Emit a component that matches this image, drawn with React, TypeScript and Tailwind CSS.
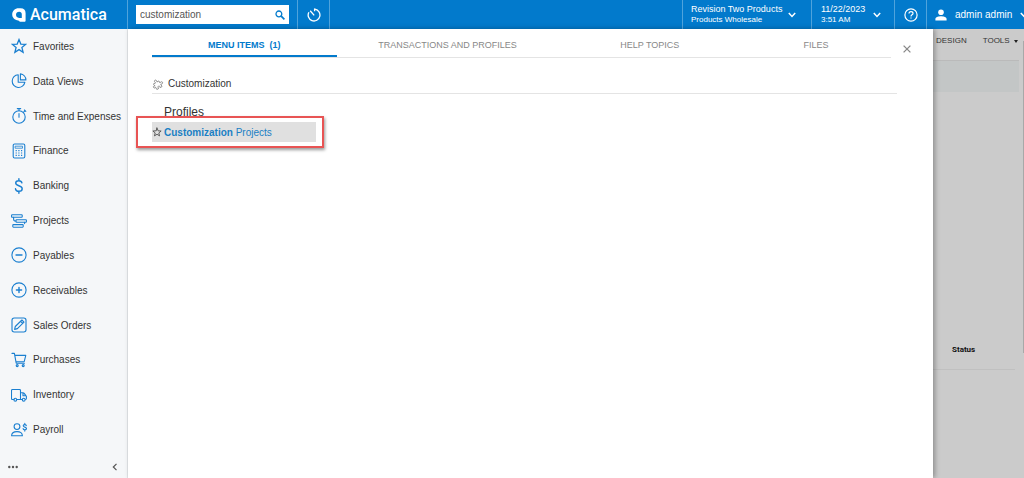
import { useState } from "react";
import type { ReactNode } from "react";

type IconProps = { children: ReactNode; className?: string };

// Shared frame for the line icons, drawn on a 16 unit grid
const LineIcon = ({ children, className = "size-4" }: IconProps) => (
  <svg
    viewBox="0 0 16 16"
    fill="none"
    stroke="currentColor"
    strokeWidth="1.1"
    strokeLinecap="round"
    strokeLinejoin="round"
    className={className}
    aria-hidden="true"
  >
    {children}
  </svg>
);

const starPath = "M8 1.6l1.8 4.5 4.8.3-3.7 3.1 1.2 4.7L8 11.6l-4.1 2.6 1.2-4.7-3.7-3.1 4.8-.3z";

const menuItems = [
  { name: "Favorites", icon: <path strokeLinejoin="miter" strokeWidth="1.3" d={starPath} /> },
  {
    name: "Data Views",
    icon: (
      <>
        <path d="M7.2 1.7a6.4 6.4 0 1 0 6.7 7.5H7.2z" />
        <path d="M9.4.9a6.2 6.2 0 0 1 5.5 6H9.4z" />
      </>
    ),
  },
  {
    name: "Time and Expenses",
    icon: (
      <>
        <circle cx="8" cy="9" r="6.2" />
        <path d="M6.3.6h3.4M8 .8v2M8 5.5v3.7M12.6 4.2l1.5-1.5M13.4 2l1.4 1.4" />
      </>
    ),
  },
  {
    name: "Finance",
    icon: (
      <>
        <rect x="2.2" y="1" width="11.6" height="14" rx="1.4" />
        <rect x="4.5" y="3.2" width="7" height="2" strokeWidth=".8" />
        <path strokeWidth="1.2" strokeDasharray="1.2 1.5" strokeLinecap="butt" d="M4.6 7.7h7M4.6 10h7M4.6 12.3h7" />
      </>
    ),
  },
  {
    name: "Banking",
    icon: (
      <path
        strokeWidth="1.4"
        d="M10.9 4.8C10.6 3.4 9.4 2.7 7.8 2.7 6 2.7 4.7 3.6 4.7 5.1c0 3.5 6.5 1.8 6.5 5.6 0 1.6-1.4 2.6-3.3 2.6S4.7 12.4 4.5 10.8M7.9.8v1.9M7.9 13.3v1.9"
      />
    ),
  },
  {
    name: "Projects",
    icon: (
      <>
        <rect x=".6" y="1.7" width="10.6" height="2.6" rx=".6" />
        <rect x="5" y="6.7" width="10.4" height="2.6" rx=".6" />
        <rect x="1.8" y="11.6" width="10.4" height="2.6" rx=".6" />
        <path d="M2.6 4.4v1.8c0 1.1.8 1.8 2.2 1.8M13.6 9.4v1.2" />
      </>
    ),
  },
  {
    name: "Payables",
    icon: (
      <>
        <circle cx="8" cy="8" r="7.1" />
        <path strokeWidth="1.3" d="M5 8h6" />
      </>
    ),
  },
  {
    name: "Receivables",
    icon: (
      <>
        <circle cx="8" cy="8" r="7.1" />
        <path strokeWidth="1.4" d="M5.4 8h5.2M8 5.4v5.2" />
      </>
    ),
  },
  {
    name: "Sales Orders",
    icon: (
      <>
        <rect x="1" y="1" width="14" height="14" rx="2.2" />
        <path d="M3.6 12.4l.7-2.9 6.6-6.5 2.1 2.1-6.6 6.5zM9.6 4.3l2.1 2.1" />
      </>
    ),
  },
  {
    name: "Purchases",
    icon: (
      <>
        <path d="M1 1.4h2.4l1.8 9.8h8.2M3.8 3.4h11l-1.6 6.2-8.2.1" />
        <circle cx="6.2" cy="13.6" r="1" />
        <circle cx="12.2" cy="13.6" r="1" />
      </>
    ),
  },
  {
    name: "Inventory",
    icon: (
      <>
        <path d="M3 12.5H1.4c-.5 0-.9-.4-.9-.9V3.4c0-.5.4-.9.9-.9h7.2c.5 0 .9.4.9.9v9.1H5.8M9.5 5.8h2.6c.4 0 .7.1.9.4l2.1 2.6c.2.2.3.5.3.8v2c0 .5-.4.9-.9.9M9.5 12.5h1.7M12 6v2.8h3" />
        <circle cx="4.3" cy="12.7" r="1.4" />
        <circle cx="12.7" cy="12.7" r="1.4" />
      </>
    ),
  },
  {
    name: "Payroll",
    icon: (
      <>
        <circle cx="6" cy="4.6" r="2.9" />
        <path d="M.6 13.8c0-2.8 2.1-4.2 5.4-4.2s5.4 1.4 5.4 4.2z" />
        <path d="M15.3 3.6c-.2-.7-.7-1-1.5-1-1 0-1.6.5-1.6 1.2 0 1.8 3.3.9 3.3 2.8 0 .8-.7 1.3-1.7 1.3s-1.6-.5-1.7-1.3M13.8 1.4v1.2M13.8 7.9v1.2" />
      </>
    ),
  },
];

const tabs = ["MENU ITEMS  (1)", "TRANSACTIONS AND PROFILES", "HELP TOPICS", "FILES"];

const Chevron = () => (
  <svg viewBox="0 0 8 6" className="w-2 shrink-0" fill="none" stroke="currentColor" strokeWidth="1.5" aria-hidden="true">
    <path d="M.8 1l3.2 3.4L7.2 1" />
  </svg>
);

const Logo = () => (
  <svg viewBox="0 0 14 14" className="size-3.5" aria-hidden="true">
    <path
      fill="#fff"
      fillRule="evenodd"
      d="M6.6.2h2c3.200 0 5 1.800 5 5v7.300c0 .8-.4 1.300-1.200 1.300H8.600c-1 0-1.400-.7-2.200-1.300C2.500 12 .2 9.500.2 6.500.2 2.800 3 .2 6.600.2zM7.200 3.800C5.300 3.800 4 5 4 6.800S5.300 9.900 7.100 9.900h2.700V6.500c0-1.700-1-2.700-2.600-2.700z"
    />
  </svg>
);

const Header = () => {
  const [query, setQuery] = useState("customization");

  return (
    <header className="flex h-[29px] shrink-0 bg-[#027acc] text-white">
      <a href="#home" className="flex w-32 items-center gap-1 border-r border-[#4fa3dc] pl-3">
        <Logo />
        <span className="font-[Roboto,sans-serif] text-[16px] leading-none font-medium">Acumatica</span>
      </a>

      {/* Search */}
      <div className="flex w-[170px] items-center border-r border-[#4fa3dc] px-2">
        <div className="flex h-[19px] w-full items-center bg-white pr-1 pl-1">
          <input
            type="text"
            aria-label="Search"
            value={query}
            onChange={(e) => setQuery(e.target.value)}
            autoFocus
            className="w-full min-w-0 text-[10px] text-[#555] outline-none"
          />
          <button type="button" aria-label="Run search" className="text-[#027acc]">
            <svg viewBox="0 0 10 10" className="size-2.5" fill="none" stroke="currentColor" strokeWidth="1.3">
              <circle cx="3.9" cy="3.9" r="2.9" />
              <path strokeWidth="1.7" d="M6.2 6.2l3.2 3.2" />
            </svg>
          </button>
        </div>
      </div>
      <button type="button" aria-label="Recently visited" className="flex w-8 items-center justify-center border-r border-[#4fa3dc]">
        <svg viewBox="0 0 14 14" className="size-3.5" fill="none" stroke="currentColor" strokeWidth="1.3">
          <path d="M7.6 1.2A5.900 5.900 0 1 1 1.900 4.200" />
          <path d="M7.600.6v2.600M3.200 2.800l4 4.600" />
        </svg>
      </button>

      <div className="flex-1" />

      <button type="button" className="flex w-[129px] items-center gap-[6px] border-l border-[#4fa3dc] pl-2 text-left">
        <span>
          <span className="block text-[9px] leading-[11px]">Revision Two Products</span>
          <span className="block text-[8px] leading-[10px]">Products Wholesale</span>
        </span>
        <Chevron />
      </button>
      <button type="button" className="flex w-[83px] items-center gap-2 border-l border-[#4fa3dc] pl-[9px] text-left">
        <span>
          <span className="block text-[9px] leading-[11px]">11/22/2023</span>
          <span className="block text-[8px] leading-[10px]">3:51 AM</span>
        </span>
        <Chevron />
      </button>
      <button type="button" aria-label="Help" className="flex w-8 items-center justify-center border-l border-[#4fa3dc]">
        <svg viewBox="0 0 14 14" className="size-3.5" fill="none" stroke="currentColor" strokeWidth="1.2">
          <circle cx="7" cy="7" r="6.1" />
          <path d="M5 5.6c0-1.2.8-2 2-2s2 .8 2 1.8c0 1.4-2 1.5-2 3M7 9.4v1.2" />
        </svg>
      </button>
      <button type="button" className="flex w-[98px] items-center gap-2 border-l border-[#4fa3dc] pl-2">
        <svg viewBox="0 0 12 12" className="size-3 shrink-0" fill="currentColor" aria-hidden="true">
          <circle cx="6" cy="3.2" r="2.8" />
          <path d="M.4 11.4V10C.4 8 3.4 7.2 6 7.2s5.6.8 5.6 2.8v1.4z" />
        </svg>
        <span className="text-[10px] whitespace-nowrap">admin admin</span>
        <Chevron />
      </button>
    </header>
  );
};

const Sidebar = () => (
  <aside className="flex w-32 shrink-0 flex-col border-r border-[#e3e6e9] bg-[#f5f7f9] text-[#333]">
    <nav className="flex flex-1 flex-col">
      {menuItems.map((item) => (
        <a key={item.name} href="#menu" className="flex flex-1 items-center gap-[6px] pl-[11px] text-[10px] whitespace-nowrap">
          <LineIcon className="size-4 shrink-0 text-[#1a7fd0]">{item.icon}</LineIcon>
          {item.name}
        </a>
      ))}
    </nav>
    <div className="flex h-[31px] items-center justify-between px-2 pt-2 text-[#555]">
      <button type="button" aria-label="More items">
        <svg viewBox="0 0 10 4" className="w-2.5" fill="currentColor">
          <circle cx="1.3" cy="2" r="1.2" />
          <circle cx="5" cy="2" r="1.2" />
          <circle cx="8.7" cy="2" r="1.2" />
        </svg>
      </button>
      <button type="button" aria-label="Collapse menu">
        <svg viewBox="0 0 8 8" className="size-2" fill="none" stroke="currentColor" strokeWidth="1.2">
          <path d="M5.5.8L2.300 4l3.200 3.200" />
        </svg>
      </button>
    </div>
  </aside>
);

const SearchPanel = () => {
  const [active, setActive] = useState(0);

  return (
    <main className="relative z-10 flex-1 bg-white pl-6 shadow-[2px_0_5px_rgba(0,0,0,0.3)]">
      {/* Tabs */}
      <div className="flex items-start">
        <div role="tablist" className="grid h-[29px] flex-1 grid-cols-[185fr_222fr_183fr_150fr] border-b border-[#e4e4e4]">
          {tabs.map((tab, idx) => (
            <button
              key={tab}
              type="button"
              role="tab"
              aria-selected={idx === active}
              onClick={() => setActive(idx)}
              className={`h-7 border-b-2 pt-2 text-[9px] whitespace-pre ${
                idx === active ? "border-[#027acc] font-bold text-[#027acc]" : "border-transparent text-[#888]"
              }`}
            >
              {tab}
            </button>
          ))}
        </div>
        <button type="button" aria-label="Close" className="mt-4 mr-[22px] ml-3 text-[#888]">
          <svg viewBox="0 0 8 8" className="size-2" fill="none" stroke="currentColor" strokeWidth="1.3">
            <path d="M.6.6l6.8 6.8M7.4.6L.6 7.4" />
          </svg>
        </button>
      </div>

      {/* Results */}
      <h2 className="mt-4 mr-9 flex h-5 items-center gap-1 border-b border-[#e4e4e4] text-[10px] text-[#333]">
        <LineIcon className="size-3 text-[#888]">
          <path
            transform="rotate(-30 8 8)"
            d="M3 5h3c-.9-1.400-.6-3.400 1-3.400S9 3.600 8.100 5H11v3c1.400-.9 3.400-.6 3.400 1s-2 1.900-3.400 1v3.600H8c.8-1.400.5-2.800-.9-2.800s-1.800 1.400-1 2.800H3V10c-1.200.8-2.500.4-2.500-1S1.800 7.100 3 8z"
          />
        </LineIcon>
        Customization
      </h2>
      <section className="w-[164px] pt-2">
        <h3 className="h-5 pl-3 text-[12px] leading-5 text-[#333]">Profiles</h3>
        <div className="relative flex h-5 items-center bg-[#e0e0e0]">
          <button type="button" aria-label="Add to favorites" className="w-3 text-[#555]">
            <LineIcon className="size-2.5">
              <path strokeWidth="1.5" d={starPath} />
            </LineIcon>
          </button>
          <a href="#projects" className="text-[10px] text-[#1a7fc4]">
            <b>Customization</b> Projects
          </a>
          <div className="pointer-events-none absolute -inset-y-1.5 -right-2 -left-4 border-2 border-[#e85454] shadow-[1px_2px_3px_rgba(0,0,0,0.4)]" />
        </div>
      </section>
    </main>
  );
};

const ScreenBehind = () => (
  <div className="flex w-[91px] shrink-0 justify-between bg-[#cbcbcb] text-[#333]">
    <div className="flex-1">
      <div className="mr-1 flex h-8 items-start gap-4 border-b border-[#bababa] pt-1.5 pl-[3px] text-[8px]">
        <button type="button">DESIGN</button>
        <button type="button" className="flex items-center gap-1">
          TOOLS
          <span className="border-x-2 border-t-3 border-x-transparent border-t-[#222]" />
        </button>
      </div>
      <div className="mr-1 h-[31px] bg-[#c3c6c6]" />
      <div className="mt-[252px] mr-2 h-[26px] border-b border-[#c0c0c0] pl-[19px] font-[Roboto,sans-serif] text-[8px] font-bold text-[#111]">
        Status
      </div>
    </div>
    <div className="mt-3 h-[312px] w-px bg-[#a8a8a8]" />
  </div>
);

const App = () => (
  <div className="flex min-h-screen flex-col overflow-hidden bg-white font-['Liberation_Sans',Arial,sans-serif]">
    <Header />
    <div className="flex flex-1">
      <Sidebar />
      <SearchPanel />
      <ScreenBehind />
    </div>
  </div>
);

export default App;
